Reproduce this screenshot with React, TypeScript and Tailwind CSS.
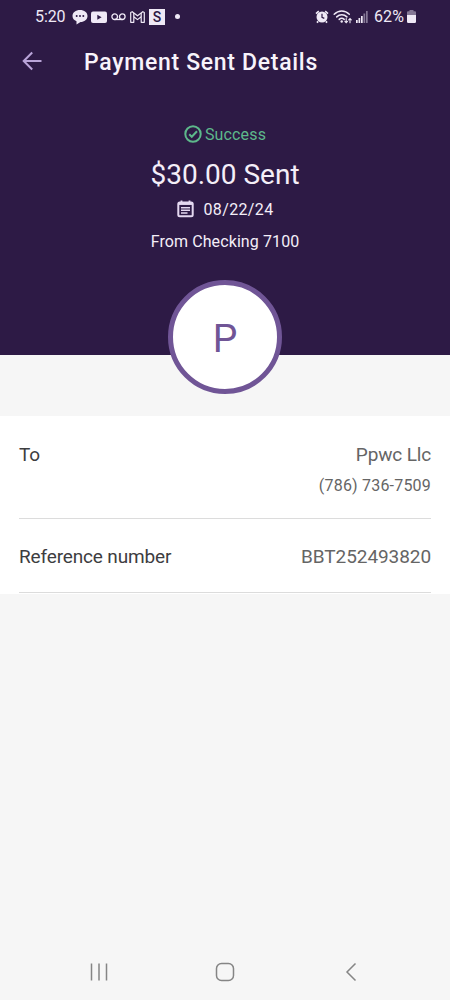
import type { ReactNode } from "react";

function StatusBar() {
  return (
    <div className="flex h-[33px] items-center pl-[35px] text-[16px] leading-[33px] tracking-[-0.1px] text-[#efe9f6]">
      <span className="w-[37px] whitespace-nowrap">5:20</span>
      <svg width="16" height="16" viewBox="0 0 16 16" className="mr-[3px]">
        <path
          d="M8 1c4.300 0 7.500 2.500 7.500 6S12.300 13 8.500 13L4.500 15.500V12.300C2 11.300.5 9.300.5 7 .5 3.500 3.700 1 8 1z"
          fill="currentColor"
        />
        <circle cx="4.700" cy="7" r="1" fill="#2d1a45" />
        <circle cx="8" cy="7" r="1" fill="#2d1a45" />
        <circle cx="11.300" cy="7" r="1" fill="#2d1a45" />
      </svg>
      <svg width="16" height="12" viewBox="0 0 16 12" className="mr-1">
        <rect x="0" y="0.500" width="16" height="11.500" rx="2" fill="currentColor" />
        <path d="M6.300 3.700v5l4.300-2.500z" fill="#2d1a45" />
      </svg>
      <svg width="15" height="8" viewBox="0 0 15 8" fill="none" stroke="currentColor" strokeWidth="1.300" className="mr-1">
        <circle cx="3.700" cy="3.700" r="2.800" />
        <circle cx="11.300" cy="3.700" r="2.800" />
        <path d="M3.700 6.500h7.600" />
      </svg>
      <svg width="15" height="12" viewBox="0 0 15 12" fill="none" stroke="currentColor" strokeWidth="1.200" strokeLinejoin="round" className="mr-1">
        <path d="M.7 1.500 2.200.7l5.300 4.100L12.800.7l1.500.8v9.800h-3.100V5.700L7.500 8.600 3.800 5.700v5.600H.7z" />
        <path d="M3.800 5.700V2M11.200 5.700V2" />
      </svg>
      <span className="flex size-4 items-center justify-center bg-[#efe9f6] text-[14px] font-medium leading-none text-[#2d1a45]">
        S
      </span>
      <span className="ml-[10px] size-[5px] rounded-full bg-[#efe9f6]" />

      <svg width="14" height="14" viewBox="0 0 14 14" fill="none" stroke="currentColor" className="ml-[135px] mr-[4px]">
        <circle cx="7" cy="7" r="5.500" fill="currentColor" stroke="none" />
        <path d="M1 3.600 3.800 1.200M13 3.600 10.200 1.200M3.200 11.300 1.900 12.700M10.800 11.300l1.300 1.400" strokeWidth="1.700" />
        <path d="M7 3.800v3.500l2.300 1.100" stroke="#2d1a45" strokeWidth="1.200" />
      </svg>
      <svg width="20" height="15" viewBox="0 0 20 15" fill="none" stroke="currentColor" strokeWidth="1.500" strokeLinecap="round" className="mr-[3px]">
        <path d="M1.200 5.200C5.500.8 12 .8 16.300 5.200M3.700 7.900c3-3 7.200-3 10.200 0M6.200 10.400c1.600-1.500 3.500-1.500 5 0" />
        <circle cx="8.700" cy="12.500" r="1.200" fill="currentColor" stroke="none" />
        <path d="M13.200 9.500v4M11.900 12.300l1.300 1.400 1.300-1.400M17 13.700v-4M15.700 10.900 17 9.500l1.300 1.400" strokeWidth="1.100" />
      </svg>
      <svg width="12" height="12" viewBox="0 0 12 12" fill="currentColor" className="mr-[6px]">
        <rect x="0" y="9" width="1.700" height="3" />
        <rect x="2.500" y="7" width="1.700" height="5" />
        <rect x="5" y="5" width="1.700" height="7" />
        <rect x="7.500" y="2.500" width="1.700" height="9.500" opacity="0.450" />
        <rect x="10" y="0" width="1.700" height="12" opacity="0.450" />
      </svg>
      <span className="w-[33px] whitespace-nowrap tracking-[0.1px]">62%</span>
      <svg width="9" height="13" viewBox="0 0 9 13" fill="currentColor">
        <path d="M2.500 0h4v1.300H8q1 0 1 1V5H0V2.300q0-1 1-1h1.500z" opacity="0.450" />
        <path d="M0 5h9v6.800q0 1.200-1.200 1.200H1.200Q0 13 0 11.800z" />
      </svg>
    </div>
  );
}

function TitleBar() {
  return (
    <div className="flex h-14 items-center pl-[22px]">
      <svg width="20" height="20" viewBox="0 0 20 20" fill="none" stroke="#b9a4d8" strokeWidth="2">
        <path d="M19.500 10H1.700M10.200 1.500 1.700 10l8.500 8.500" />
      </svg>
      <h1 className="ml-[42px] whitespace-nowrap pt-[5px] text-[23px] font-medium tracking-[0.700px] text-[#f8f3fb]">
        Payment Sent Details
      </h1>
    </div>
  );
}

function Summary() {
  return (
    <div className="flex flex-col items-center pt-[34px] text-[#f4eef8]">
      <div className="flex h-[22px] items-center gap-[3px] text-[16px] tracking-[0.150px] text-[#5db88b]">
        <svg width="18" height="18" viewBox="0 0 18 18" fill="none" stroke="currentColor" strokeWidth="2">
          <circle cx="9" cy="9" r="7.700" />
          <path d="m5.200 9.200 2.600 2.600 5.200-5.500" />
        </svg>
        <span className="pt-0.5">Success</span>
      </div>
      <p className="mt-3 h-9 whitespace-nowrap text-[28px] leading-9">$30.00 Sent</p>
      <div className="mt-[4px] flex h-6 items-center gap-[10px] text-[16px] tracking-[0.350px]">
        <svg width="17" height="18" viewBox="0 0 17 18" fill="none" stroke="#e4d8f0">
          <rect x="1.300" y="2.500" width="14.400" height="13.700" rx="1.500" strokeWidth="2" />
          <path d="M1 3.700h15" strokeWidth="2.500" />
          <path d="M4.500.5v3M12.500.5v3" strokeWidth="1.800" />
          <path d="M4 7.700h9M4 10.300h9M4 13h6.500" strokeWidth="1.400" />
        </svg>
        <span className="pt-0.5">08/22/24</span>
      </div>
      <p className="mt-[9px] h-6 whitespace-nowrap text-[16px] leading-6 tracking-[0.100px]">From Checking 7100</p>
    </div>
  );
}

function DetailRow({ label, children }: { label: string; children: ReactNode }) {
  return (
    <div className="flex justify-between border-b border-[#dcdcdc] pt-6 text-[19px] leading-7 tracking-[-0.150px] text-[#656565]">
      <span className="text-[#3d3d3f]">{label}</span>
      <div className="text-right">{children}</div>
    </div>
  );
}

function NavBar() {
  return (
    <nav className="mt-auto flex h-14 items-center pl-[90px]">
      <svg width="18" height="20" viewBox="0 0 18 20" stroke="#858585" strokeWidth="1.500">
        <path d="M1.500 1.500v17M9 1.500v17M16.500 1.500v17" />
      </svg>
      <svg width="20" height="20" viewBox="0 0 20 20" fill="none" stroke="#858585" strokeWidth="1.500" className="ml-[107px] mr-[110px]">
        <rect x="1.500" y="1.500" width="17" height="17" rx="5" />
      </svg>
      <svg width="12" height="20" viewBox="0 0 12 20" fill="none" stroke="#858585" strokeWidth="1.500">
        <path d="M10.500 1.500 2 10l8.500 8.500" />
      </svg>
    </nav>
  );
}

export default function App() {
  return (
    <div className="flex h-[1000px] w-[450px] flex-col bg-[#f6f6f6] font-[Roboto,sans-serif]">
      <header className="h-[355px] shrink-0 bg-[#2d1a45]">
        <StatusBar />
        <TitleBar />
        <Summary />
      </header>

      {/* Avatar straddles the header edge */}
      <div className="z-10 -mt-[75px] mb-[22px] flex size-[114px] shrink-0 items-center justify-center self-center rounded-full border-[5px] border-[#705596] bg-white pt-1 text-[39px] text-[#705596]">
        P
      </div>

      <main className="h-[178px] shrink-0 bg-white px-[19px] pt-px">
        <DetailRow label="To">
          <p>Ppwc Llc</p>
          <p className="mt-[3px] pb-[18px] text-[16px] tracking-[0.200px]">(786) 736-7509</p>
        </DetailRow>
        <DetailRow label="Reference number">
          <p className="pb-[21px] tracking-[-0.080px]">BBT252493820</p>
        </DetailRow>
      </main>

      <NavBar />
    </div>
  );
}
